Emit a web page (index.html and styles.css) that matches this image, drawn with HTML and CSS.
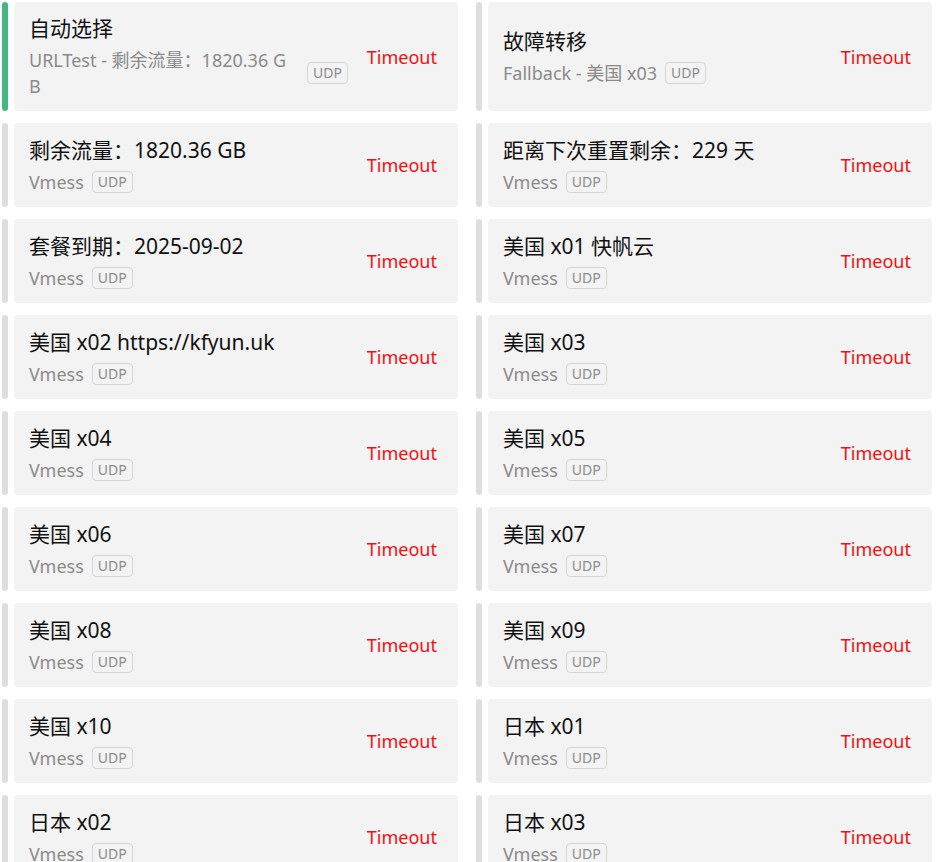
FILE: index.html
```html
<!DOCTYPE html>
<html lang="zh-CN">
<head>
<meta charset="utf-8">
<title>Proxies</title>
<link rel="stylesheet" href="styles.css">
</head>
<body>
<div class="grid">
  <div class="item active">
    <div class="bar"></div>
    <div class="card">
      <div class="info">
        <div class="name">自动选择</div>
        <div class="sub"><span class="type wrap">URLTest - 剩余流量：1820.36 GB</span><span class="udp">UDP</span></div>
      </div>
      <div class="delay">Timeout</div>
    </div>
  </div>
  <div class="item">
    <div class="bar"></div>
    <div class="card">
      <div class="info">
        <div class="name">故障转移</div>
        <div class="sub"><span class="type">Fallback - 美国 x03</span><span class="udp">UDP</span></div>
      </div>
      <div class="delay">Timeout</div>
    </div>
  </div>
  <div class="item"><div class="bar"></div><div class="card"><div class="info"><div class="name">剩余流量：1820.36 GB</div><div class="sub"><span class="type">Vmess</span><span class="udp">UDP</span></div></div><div class="delay">Timeout</div></div></div>
  <div class="item"><div class="bar"></div><div class="card"><div class="info"><div class="name">距离下次重置剩余：229 天</div><div class="sub"><span class="type">Vmess</span><span class="udp">UDP</span></div></div><div class="delay">Timeout</div></div></div>
  <div class="item"><div class="bar"></div><div class="card"><div class="info"><div class="name">套餐到期：2025-09-02</div><div class="sub"><span class="type">Vmess</span><span class="udp">UDP</span></div></div><div class="delay">Timeout</div></div></div>
  <div class="item"><div class="bar"></div><div class="card"><div class="info"><div class="name">美国 x01 快帆云</div><div class="sub"><span class="type">Vmess</span><span class="udp">UDP</span></div></div><div class="delay">Timeout</div></div></div>
  <div class="item"><div class="bar"></div><div class="card"><div class="info"><div class="name">美国 x02 https://kfyun.uk</div><div class="sub"><span class="type">Vmess</span><span class="udp">UDP</span></div></div><div class="delay">Timeout</div></div></div>
  <div class="item"><div class="bar"></div><div class="card"><div class="info"><div class="name">美国 x03</div><div class="sub"><span class="type">Vmess</span><span class="udp">UDP</span></div></div><div class="delay">Timeout</div></div></div>
  <div class="item"><div class="bar"></div><div class="card"><div class="info"><div class="name">美国 x04</div><div class="sub"><span class="type">Vmess</span><span class="udp">UDP</span></div></div><div class="delay">Timeout</div></div></div>
  <div class="item"><div class="bar"></div><div class="card"><div class="info"><div class="name">美国 x05</div><div class="sub"><span class="type">Vmess</span><span class="udp">UDP</span></div></div><div class="delay">Timeout</div></div></div>
  <div class="item"><div class="bar"></div><div class="card"><div class="info"><div class="name">美国 x06</div><div class="sub"><span class="type">Vmess</span><span class="udp">UDP</span></div></div><div class="delay">Timeout</div></div></div>
  <div class="item"><div class="bar"></div><div class="card"><div class="info"><div class="name">美国 x07</div><div class="sub"><span class="type">Vmess</span><span class="udp">UDP</span></div></div><div class="delay">Timeout</div></div></div>
  <div class="item"><div class="bar"></div><div class="card"><div class="info"><div class="name">美国 x08</div><div class="sub"><span class="type">Vmess</span><span class="udp">UDP</span></div></div><div class="delay">Timeout</div></div></div>
  <div class="item"><div class="bar"></div><div class="card"><div class="info"><div class="name">美国 x09</div><div class="sub"><span class="type">Vmess</span><span class="udp">UDP</span></div></div><div class="delay">Timeout</div></div></div>
  <div class="item"><div class="bar"></div><div class="card"><div class="info"><div class="name">美国 x10</div><div class="sub"><span class="type">Vmess</span><span class="udp">UDP</span></div></div><div class="delay">Timeout</div></div></div>
  <div class="item"><div class="bar"></div><div class="card"><div class="info"><div class="name">日本 x01</div><div class="sub"><span class="type">Vmess</span><span class="udp">UDP</span></div></div><div class="delay">Timeout</div></div></div>
  <div class="item"><div class="bar"></div><div class="card"><div class="info"><div class="name">日本 x02</div><div class="sub"><span class="type">Vmess</span><span class="udp">UDP</span></div></div><div class="delay">Timeout</div></div></div>
  <div class="item"><div class="bar"></div><div class="card"><div class="info"><div class="name">日本 x03</div><div class="sub"><span class="type">Vmess</span><span class="udp">UDP</span></div></div><div class="delay">Timeout</div></div></div>
</div>
</body>
</html>
```
FILE: styles.css
```css
html, body {
  margin: 0;
  padding: 0;
  background: #ffffff;
  overflow: hidden;
}
body {
  font-family: "Noto Sans", "Noto Sans CJK SC", sans-serif;
  color: #111111;
}
.grid {
  display: grid;
  grid-template-columns: 456px 456px;
  column-gap: 18px;
  row-gap: 12px;
  padding: 2px 0 0 2px;
}
.item {
  display: flex;
  align-items: stretch;
  gap: 6px;
}
.bar {
  width: 6px;
  flex: 0 0 6px;
  border-radius: 3px;
  background: #dedede;
}
.item.active .bar {
  background: #3fb884;
}
.card {
  flex: 1;
  display: flex;
  align-items: center;
  background: #f3f3f3;
  border-radius: 4px;
  padding: 12px 21px 12px 15px;
  min-height: 84px;
  box-sizing: border-box;
}
.info {
  flex: 1;
  min-width: 0;
}
.name {
  font-size: 21px;
  line-height: 29px;
  color: #111111;
  white-space: nowrap;
}
.sub {
  display: flex;
  align-items: center;
  margin-top: 4px;
  font-size: 18px;
  line-height: 26px;
  color: #8a8a8a;
}
.type {
  white-space: nowrap;
}
.type.wrap {
  white-space: normal;
  word-break: break-all;
  width: 268px;
  flex: 0 0 268px;
  margin-right: 2px;
}
.udp {
  margin-left: 8px;
  font-size: 14px;
  line-height: 20px;
  padding: 0 5px;
  border: 1px solid #d6d6d6;
  border-radius: 4px;
  color: #8c8c8c;
}
.delay {
  flex: 0 0 auto;
  margin-left: 16px;
  font-size: 18px;
  line-height: 26px;
  color: #f01010;
}
```
